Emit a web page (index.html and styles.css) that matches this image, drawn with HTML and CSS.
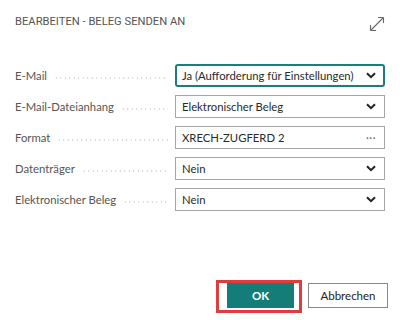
FILE: index.html
```html
<!DOCTYPE html>
<html lang="de">
<head>
<meta charset="utf-8">
<link rel="stylesheet" href="styles.css">
</head>
<body>
<div class="dialog">
  <div class="header">
    <div class="title">BEARBEITEN - BELEG SENDEN AN</div>
    <svg class="expand" width="18" height="18" viewBox="0 0 18 18">
      <path d="M2.5 15.5 L15.5 2.5 M2.5 15.5 L2.5 10 M2.5 15.5 L8 15.5 M15.5 2.5 L10 2.5 M15.5 2.5 L15.5 8" fill="none" stroke="#666" stroke-width="1.1"/>
    </svg>
  </div>
  <div class="form">
    <div class="label"><span class="text">E-Mail</span><span class="dots"></span></div>
    <div class="field focused"><span class="value">Ja (Aufforderung für Einstellungen)</span><svg class="chev" width="10" height="7" viewBox="0 0 10 7"><path d="M1 1.2 L5 5.2 L9 1.2" fill="none" stroke="#222" stroke-width="2"/></svg></div>

    <div class="label"><span class="text">E-Mail-Dateianhang</span><span class="dots"></span></div>
    <div class="field"><span class="value">Elektronischer Beleg</span><svg class="chev" width="10" height="7" viewBox="0 0 10 7"><path d="M1 1.2 L5 5.2 L9 1.2" fill="none" stroke="#222" stroke-width="2"/></svg></div>

    <div class="label"><span class="text">Format</span><span class="dots"></span></div>
    <div class="field"><span class="value">XRECH-ZUGFERD 2</span><span class="more">···</span></div>

    <div class="label"><span class="text">Datenträger</span><span class="dots"></span></div>
    <div class="field"><span class="value">Nein</span><svg class="chev" width="10" height="7" viewBox="0 0 10 7"><path d="M1 1.2 L5 5.2 L9 1.2" fill="none" stroke="#222" stroke-width="2"/></svg></div>

    <div class="label"><span class="text">Elektronischer Beleg</span><span class="dots"></span></div>
    <div class="field"><span class="value">Nein</span><svg class="chev" width="10" height="7" viewBox="0 0 10 7"><path d="M1 1.2 L5 5.2 L9 1.2" fill="none" stroke="#222" stroke-width="2"/></svg></div>
  </div>
  <div class="footer">
    <div class="highlight"><button class="btn primary">OK</button></div>
    <button class="btn secondary">Abbrechen</button>
  </div>
</div>
</body>
</html>
```

FILE: styles.css
```css
html, body {
  margin: 0;
  padding: 0;
  background: #fff;
}
.dialog {
  width: 400px;
  height: 320px;
  box-sizing: border-box;
  padding: 14px 15px 0 15px;
  font-family: "Lato", "Open Sans", sans-serif;
  color: #333;
}
.header {
  display: flex;
  justify-content: space-between;
  align-items: flex-start;
  height: 50px;
}
.title {
  font-family: "Roboto", sans-serif;
  font-size: 11.2px;
  color: #555;
  line-height: 14px;
  padding-top: 1px;
}
.expand {
  margin-top: 1px;
  margin-right: -1px;
}
.form {
  display: grid;
  grid-template-columns: 160px 210px;
  row-gap: 8px;
  align-items: center;
}
.label {
  display: flex;
  align-items: center;
  font-size: 11.3px;
  color: #555;
  height: 23px;
}
.label .text {
  white-space: nowrap;
}
.dots {
  flex: 1;
  height: 2px;
  margin: 4px 7px 0 7px;
  background-image: radial-gradient(circle, #d0d0d0 0.7px, transparent 1px);
  background-size: 4.5px 2px;
  background-repeat: repeat-x;
}
.field {
  height: 23px;
  box-sizing: border-box;
  border: 1px solid #a6a6a6;
  display: flex;
  align-items: center;
  justify-content: space-between;
  padding: 0 8px 0 6px;
  font-size: 11.3px;
  color: #2a2a2a;
  white-space: nowrap;
}
.field.focused {
  border: 2px solid #1a7f7a;
  border-radius: 3px;
  padding: 0 7px 0 5px;
}
.chev {
  display: block;
}
.more {
  color: #666;
  font-size: 11px;
  letter-spacing: 0.5px;
}
.footer {
  display: flex;
  justify-content: flex-end;
  align-items: flex-start;
  margin-top: 69px;
  margin-right: -3px;
  gap: 6px;
}
.highlight {
  border: 3px solid #e03c3c;
  padding: 0 5px 2px 8px;
}
.btn {
  font-family: "Lato", "Open Sans", sans-serif;
  font-size: 11.5px;
  height: 25px;
  box-sizing: border-box;
  display: block;
  margin: 0;
}
.primary {
  width: 67px;
  background: #147d78;
  color: #fff;
  font-weight: bold;
  border: none;
}
.secondary {
  width: 80px;
  margin-top: 3px;
  background: #fff;
  color: #222;
  border: 1px solid #8a8a8a;
}
```
